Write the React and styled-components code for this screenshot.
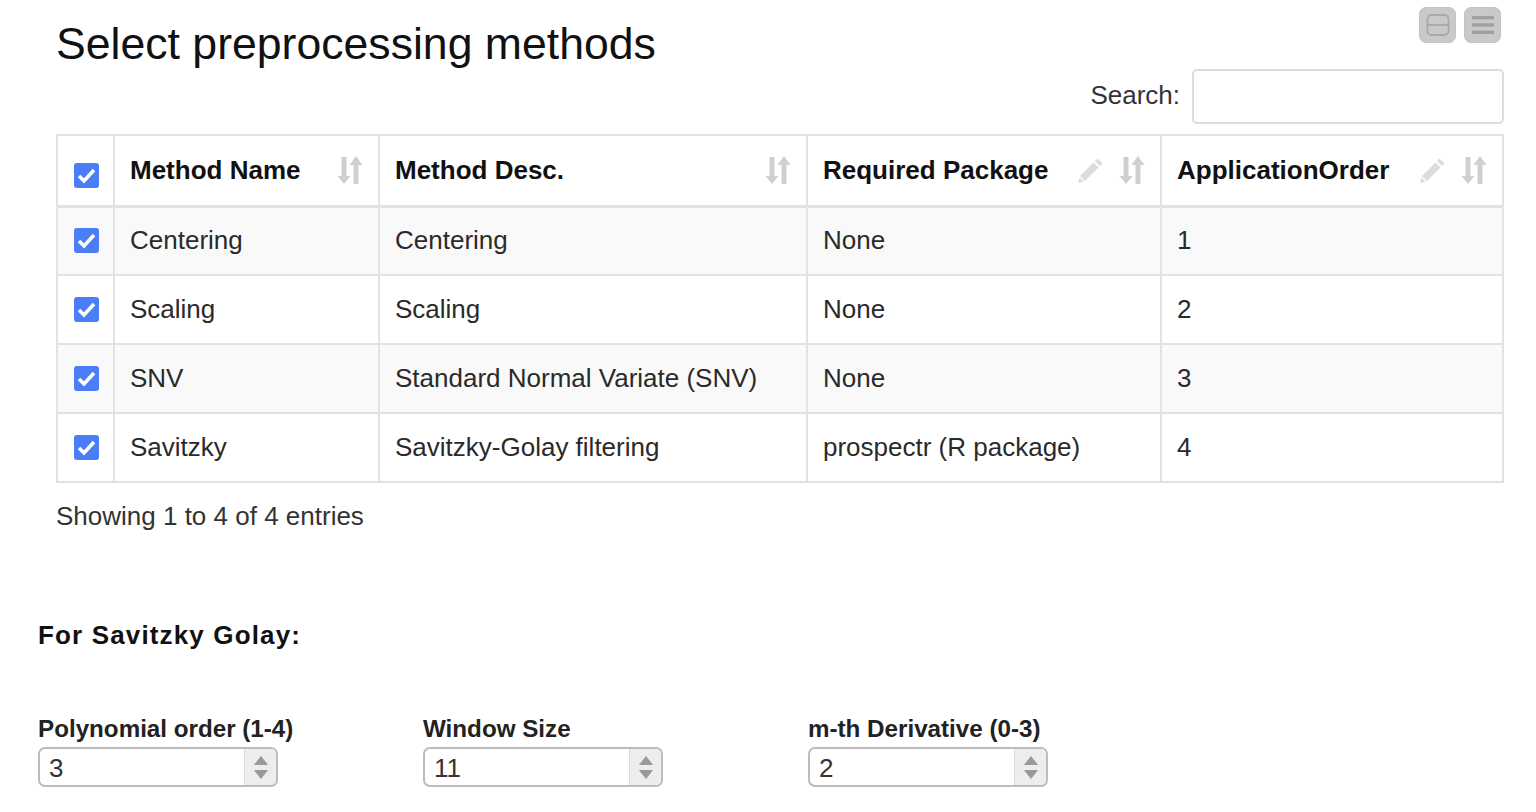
import React from "react";
import styled, { createGlobalStyle } from "styled-components";

const Global = createGlobalStyle`
  html, body { margin: 0; padding: 0; background: #fff; }
  body { font-family: "Liberation Sans", Arial, sans-serif; color: #222; overflow: hidden; }
`;
const Page = styled.div`
  width: 1536px; height: 812px; box-sizing: border-box; padding: 7px 32px 0 38px; overflow: hidden;
`;
const Section = styled.section`
  margin-left: 18px;
`;
const Head = styled.header`
  display: flex; justify-content: space-between; height: 127px;
`;
const Title = styled.h3`
  margin: 12px 0 0; font-size: 44.6px; line-height: 50px; font-weight: 400; color: #111;
`;
const Tools = styled.div`
  display: flex; flex-direction: column; align-items: flex-end;
`;
const ToolRow = styled.div`
  display: flex; gap: 8px; margin-right: 3px;
`;
const ToolButton = styled.button`
  width: 37px; height: 36px; padding: 0; border: 1px solid #c4c4c4; border-radius: 7px; background: #c9c9c9;
  display: flex; align-items: center; justify-content: center;
`;
const SearchRow = styled.label`
  display: flex; align-items: center; gap: 12px; margin-top: 26px; font-size: 26px; color: #333;
`;
const SearchLabel = styled.span`
  margin-bottom: 2px;
`;
const SearchInput = styled.input`
  width: 312px; height: 55px; box-sizing: border-box; border: 2px solid #dcdcdc; border-radius: 5px; background: #fff;
`;
const Table = styled.table`
  width: 1446px; table-layout: fixed; border-collapse: collapse; font-size: 26px;
  border: 2px solid #e2e2e2;
`;
const HeadCell = styled.th`
  height: 71px; box-sizing: border-box; padding: 0 14px 0 15px; text-align: left; font-weight: 700; color: #111;
  border: 2px solid #e2e2e2; border-bottom-width: 3px; background: #fff;
`;
const HeadInner = styled.div`
  display: flex; align-items: center; justify-content: space-between;
`;
const HeadIcons = styled.span`
  display: flex; align-items: center; gap: 14px; margin-right: 1px;
`;
const Row = styled.tr`
  background: ${p => (p.$striped ? "#f9f9f9" : "#fff")};
`;
const Cell = styled.td`
  height: 69px; box-sizing: border-box; padding: 0 14px 0 15px; color: #2a2a2a; border: 2px solid #e2e2e2;
`;
const CheckCell = styled(Cell)`
  padding: 0 0 4px 1px; text-align: center;
`;
const CheckHead = styled(HeadCell)`
  padding: 7px 0 0 1px; text-align: center;
`;
const Box = styled.span`
  display: inline-flex; width: 25px; height: 25px; border-radius: 3px; background: #4a7df7;
  align-items: center; justify-content: center; vertical-align: middle;
`;
const Info = styled.div`
  margin-top: 17px; font-size: 26px; line-height: 32px; color: #333;
`;
const SubTitle = styled.h4`
  margin: 87px 0 0; font-size: 26px; line-height: 32px; font-weight: 700; color: #111; letter-spacing: 1.15px;
`;
const Params = styled.div`
  display: flex; margin-top: 63px;
`;
const Param = styled.div`
  width: 385px; flex: none;
`;
const ParamLabel = styled.label`
  display: block; font-size: 24.2px; line-height: 30px; font-weight: 700; color: #222;
`;
const Spin = styled.div`
  margin-top: 3px; width: 240px; height: 40px; box-sizing: border-box; border: 2px solid #bcbcbc; border-radius: 7px;
  display: flex; overflow: hidden; background: #fff;
`;
const SpinValue = styled.div`
  flex: 1; padding-left: 9px; font-size: 26px; line-height: 39px; color: #333;
`;
const SpinArrows = styled.div`
  width: 32px; background: #ededed; border-left: 1px solid #dcdcdc; display: flex; flex-direction: column;
  align-items: center; justify-content: space-around; padding: 4px 0; box-sizing: border-box;
`;

const Check = () => (
  <Box>
    <svg width="19" height="19" viewBox="0 0 19 19">
      <path d="M2 10 L7 15 L17 4" fill="none" stroke="#fff" strokeWidth="3.6" />
    </svg>
  </Box>
);
const Sort = () => (
  <svg width="26" height="30" viewBox="0 0 26 30" fill="#cfcfcf">
    <path d="M4.5 2h5v19h4l-6.5 8-6.5-8h4z" />
    <path d="M16.5 29h5V10h4L19 1l-6.5 9h4z" />
  </svg>
);
const Pencil = () => (
  <svg width="28" height="28" viewBox="0 0 28 28" fill="#dcdcdc">
    <path d="M20.5 2.5l5 5-2.5 2.5-5-5z" />
    <path d="M16.5 6.5l5 5L8 25l-5-5z" />
    <path d="M2.5 21.5l4 4-5.5 1.5z" />
  </svg>
);
const HeadLabel = ({ children, edit }) => (
  <HeadCell>
    <HeadInner>
      <span>{children}</span>
      <HeadIcons>
        {edit && <Pencil />}
        <Sort />
      </HeadIcons>
    </HeadInner>
  </HeadCell>
);
const rows = [
  ["Centering", "Centering", "None", "1"],
  ["Scaling", "Scaling", "None", "2"],
  ["SNV", "Standard Normal Variate (SNV)", "None", "3"],
  ["Savitzky", "Savitzky-Golay filtering", "prospectr (R package)", "4"],
];
const params = [
  ["Polynomial order (1-4)", "3"],
  ["Window Size", "11"],
  ["m-th Derivative (0-3)", "2"],
];

export default function App() {
  return (
    <Page>
      <Global />
      <Section>
        <Head>
          <Title>Select preprocessing methods</Title>
          <Tools>
            <ToolRow>
              <ToolButton aria-label="Collapse">
                <svg width="24" height="22" viewBox="0 0 24 22" fill="none" stroke="#a9a9a9" strokeWidth="1.8">
                  <rect x="1.5" y="1" width="21" height="20" rx="4" />
                  <path d="M1.5 11h21" />
                </svg>
              </ToolButton>
              <ToolButton aria-label="Menu">
                <svg width="22" height="18" viewBox="0 0 22 18" fill="#a0a0a0">
                  <rect y="0" width="22" height="3.4" />
                  <rect y="7.3" width="22" height="3.4" />
                  <rect y="14.6" width="22" height="3.4" />
                </svg>
              </ToolButton>
            </ToolRow>
            <SearchRow>
              <SearchLabel>Search:</SearchLabel>
              <SearchInput />
            </SearchRow>
          </Tools>
        </Head>
        <Table>
          <colgroup>
            <col style={{ width: 57 }} />
            <col style={{ width: 265 }} />
            <col style={{ width: 428 }} />
            <col style={{ width: 354 }} />
            <col style={{ width: 342 }} />
          </colgroup>
          <thead>
            <tr>
              <CheckHead><Check /></CheckHead>
              <HeadLabel>Method Name</HeadLabel>
              <HeadLabel>Method Desc.</HeadLabel>
              <HeadLabel edit>Required Package</HeadLabel>
              <HeadLabel edit>ApplicationOrder</HeadLabel>
            </tr>
          </thead>
          <tbody>
            {rows.map((r, i) => (
              <Row key={r[0]} $striped={i % 2 === 0}>
                <CheckCell><Check /></CheckCell>
                {r.map((c, j) => <Cell key={j}>{c}</Cell>)}
              </Row>
            ))}
          </tbody>
        </Table>
        <Info>Showing 1 to 4 of 4 entries</Info>
      </Section>
      <SubTitle>For Savitzky Golay:</SubTitle>
      <Params>
        {params.map(([l, v]) => (
          <Param key={l}>
            <ParamLabel>{l}</ParamLabel>
            <Spin>
              <SpinValue>{v}</SpinValue>
              <SpinArrows>
                <svg width="16" height="9" viewBox="0 0 18 10"><path d="M9 0l8 10H1z" fill="#999" /></svg>
                <svg width="16" height="9" viewBox="0 0 18 10"><path d="M1 0h16L9 10z" fill="#999" /></svg>
              </SpinArrows>
            </Spin>
          </Param>
        ))}
      </Params>
    </Page>
  );
}
